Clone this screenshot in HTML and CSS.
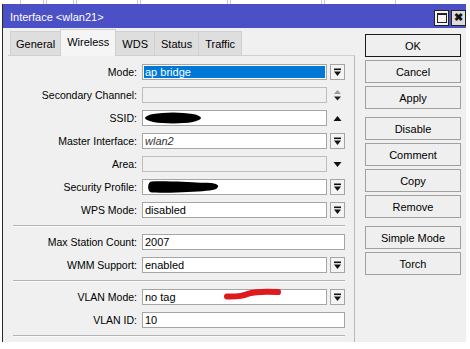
FILE: index.html
```html
<!DOCTYPE html>
<html lang="en">
<head>
  <meta charset="UTF-8" />
  <title>Interface &lt;wlan21&gt;</title>
  <link rel="stylesheet" href="styles.css">
</head>
<body>
  <div class="topstrip">
    <span class="bit" style="width:22px"></span><span class="bit" style="width:26px"></span><span class="bit" style="width:60px"></span><span class="bit" style="width:86px"></span><span class="bit" style="width:90px"></span><span class="bit" style="width:70px"></span>
  </div>
  <div class="window">
    <div class="titlebar">
      <span class="title">Interface &lt;wlan21&gt;</span>
      <div class="winbtns">
        <span class="wbtn max"><i></i></span>
        <span class="wbtn close">&#x2716;</span>
      </div>
    </div>
    <div class="main">
      <div class="left">
        <div class="tabs">
          <div class="tab">General</div>
          <div class="tab active">Wireless</div>
          <div class="tab">WDS</div>
          <div class="tab">Status</div>
          <div class="tab">Traffic</div>
        </div>
        <div class="panel">
          <div class="row">
            <label>Mode:</label>
            <div class="ctl"><div class="field sel">ap bridge</div><span class="dd"><svg width="9" height="9" viewBox="0 0 9 9"><rect x="1" y="0.5" width="7" height="1.6"/><polygon points="1,3.5 8,3.5 4.5,8"/></svg></span></div>
          </div>
          <div class="row">
            <label>Secondary Channel:</label>
            <div class="ctl"><div class="field off"></div><span class="ico"><svg width="9" height="13" viewBox="0 0 9 13"><polygon points="1,5 8,5 4.5,1" fill="#9a9a9a"/><polygon points="1,7.5 8,7.5 4.5,11.5" fill="#222"/></svg></span></div>
          </div>
          <div class="row">
            <label>SSID:</label>
            <div class="ctl">
              <div class="field"><svg class="blot" width="60" height="12" viewBox="0 0 60 12"><ellipse cx="29" cy="6" rx="28" ry="5.5"/></svg></div>
              <span class="ico"><svg width="9" height="9" viewBox="0 0 9 9"><polygon points="0.5,7 8.5,7 4.5,2"/></svg></span>
            </div>
          </div>
          <div class="row">
            <label>Master Interface:</label>
            <div class="ctl"><div class="field it">wlan2</div><span class="dd"><svg width="9" height="9" viewBox="0 0 9 9"><rect x="1" y="0.5" width="7" height="1.6"/><polygon points="1,3.5 8,3.5 4.5,8"/></svg></span></div>
          </div>
          <div class="row">
            <label>Area:</label>
            <div class="ctl"><div class="field off"></div><span class="ico"><svg width="9" height="9" viewBox="0 0 9 9"><polygon points="0.5,2 8.5,2 4.5,7"/></svg></span></div>
          </div>
          <div class="row">
            <label>Security Profile:</label>
            <div class="ctl">
              <div class="field"><svg class="blot" width="78" height="13" viewBox="0 0 78 13"><path d="M5 0.5 C22 0 45 1 58 2 C67 1.5 75 2 77 5 C78 9 72 10.5 60 11 C45 12 20 13 5 12.5 C0 12 0 1 5 0.5 Z"/></svg></div>
              <span class="dd"><svg width="9" height="9" viewBox="0 0 9 9"><rect x="1" y="0.5" width="7" height="1.6"/><polygon points="1,3.5 8,3.5 4.5,8"/></svg></span>
            </div>
          </div>
          <div class="row">
            <label>WPS Mode:</label>
            <div class="ctl"><div class="field">disabled</div><span class="dd"><svg width="9" height="9" viewBox="0 0 9 9"><rect x="1" y="0.5" width="7" height="1.6"/><polygon points="1,3.5 8,3.5 4.5,8"/></svg></span></div>
          </div>
          <div class="sep"></div>
          <div class="row">
            <label>Max Station Count:</label>
            <div class="ctl"><div class="field">2007</div></div>
          </div>
          <div class="row">
            <label>WMM Support:</label>
            <div class="ctl"><div class="field">enabled</div><span class="dd"><svg width="9" height="9" viewBox="0 0 9 9"><rect x="1" y="0.5" width="7" height="1.6"/><polygon points="1,3.5 8,3.5 4.5,8"/></svg></span></div>
          </div>
          <div class="sep"></div>
          <div class="row">
            <label>VLAN Mode:</label>
            <div class="ctl">
              <div class="field">no tag</div><span class="dd"><svg width="9" height="9" viewBox="0 0 9 9"><rect x="1" y="0.5" width="7" height="1.6"/><polygon points="1,3.5 8,3.5 4.5,8"/></svg></span>
              <svg class="scribble" width="60" height="14" viewBox="0 0 60 14"><path d="M4 9.5 C14 10 20 9 26 6.5 C34 4 46 4.5 55 5" fill="none" stroke="#e0191c" stroke-width="6" stroke-linecap="round"/></svg>
            </div>
          </div>
          <div class="row">
            <label>VLAN ID:</label>
            <div class="ctl"><div class="field">10</div></div>
          </div>
          <div class="sep"></div>
          <div class="row">
            <label></label>
            <div class="ctl short"><div class="field"></div></div>
          </div>
        </div>
      </div>
      <div class="buttons">
        <div class="group">
          <button class="default">OK</button>
          <button>Cancel</button>
          <button>Apply</button>
        </div>
        <div class="group">
          <button>Disable</button>
          <button>Comment</button>
          <button>Copy</button>
          <button>Remove</button>
        </div>
        <div class="group">
          <button>Simple Mode</button>
          <button>Torch</button>
        </div>
      </div>
    </div>
  </div>
</body>
</html>
```

FILE: styles.css
```css
body { margin: 0; background: #fff; font-family: "Liberation Sans", Arial, sans-serif; font-size: 10.5px; color: #000; width: 470px; height: 349px; overflow: hidden; }

.topstrip { height: 4px; display: flex; gap: 2px; padding-left: 20px; overflow: hidden; }
.topstrip .bit { height: 4px; border-left: 1px solid #c8c8c8; border-right: 1px solid #c8c8c8; }

.window { width: 463px; height: 338px; margin-left: 2px; border-left: 1px solid #2a2a2a; background: #f0f0f0; display: flex; flex-direction: column; }

.titlebar { height: 24px; background: #4b50c6; display: flex; align-items: center; justify-content: space-between; }
.title { color: #fff; font-size: 11px; margin-left: 7px; margin-top: 1px; }
.winbtns { display: flex; gap: 2px; margin-right: 0; margin-top: 3px; }
.wbtn { width: 13px; height: 14px; border: 1px solid #222; background: #f4f4f4; display: flex; align-items: center; justify-content: center; }
.wbtn.max i { width: 8px; height: 7px; border: 1px solid #222; border-top-width: 2px; }
.wbtn.close { background: #dcdcdc; font-size: 11px; font-weight: bold; color: #111; line-height: 1; }

.main { flex: 1; display: flex; min-height: 0; }
.left { width: 347px; padding-left: 5px; display: flex; flex-direction: column; }

.tabs { height: 27px; display: flex; align-items: flex-end; padding-left: 2px; position: relative; z-index: 1; }
.tab { height: 24px; box-sizing: border-box; padding: 0 6px; border: 1px solid #d0d0d0; border-bottom: none; margin-right: -1px; background: #dedede; display: flex; align-items: center; font-size: 11px; }
.tab:first-child { padding: 0 5px; }
.tab.active { height: 27px; margin-bottom: -1px; background: #f5f5f5; padding-bottom: 3px; }

.panel { flex: 1; min-height: 0; overflow: hidden; border-top: 1px solid #d0d0d0; border-right: 1px solid #b9b9b9; background: #f0f0f0; padding-top: 8px; display: flex; flex-direction: column; gap: 7px; }

.row { display: flex; align-items: center; height: 16px; flex-shrink: 0; }
.row label { width: 129px; text-align: right; margin-right: 5px; white-space: nowrap; }
.ctl { width: 203px; height: 16px; display: flex; gap: 3px; position: relative; }
.ctl.short { width: 163px; }
.field { flex: 1; height: 16px; box-sizing: border-box; border: 1px solid #a5a5a5; background: #fff; padding-left: 2px; line-height: 14px; white-space: nowrap; position: relative; overflow: hidden; font-size: 11px; }
.field.sel { background: #0078d7; color: #fff; border-color: #a5a5a5; box-shadow: inset 0 0 0 1px #fff; }
.field.off { background: #f0f0f0; border-color: #bdbdbd; }
.field.it { font-style: italic; color: #333; }
.blot { position: absolute; left: 1px; top: 1px; height: 12px; }

.dd { width: 15px; height: 16px; box-sizing: border-box; border: 1px solid #a5a5a5; background: #f4f4f4; display: flex; align-items: center; justify-content: center; }
.dd svg { fill: #111; }
.ico { width: 15px; height: 16px; display: flex; align-items: center; justify-content: center; }
.ico svg { fill: #111; }

.scribble { position: absolute; left: 81px; top: -2px; }

.sep { height: 0; flex-shrink: 0; margin-left: 5px; width: 332px; border-top: 1px solid #b4b4b4; border-bottom: 1px solid #fafafa; }

.buttons { width: 96px; margin-left: 10px; margin-top: 6px; display: flex; flex-direction: column; gap: 8px; }
.group { display: flex; flex-direction: column; gap: 3px; }
button { height: 23px; width: 96px; font-family: inherit; font-size: 11px; color: #000; background: #efefef; border: 1px solid #a0a0a0; padding: 0; }
button.default { border-color: #1a1a1a; }
```
